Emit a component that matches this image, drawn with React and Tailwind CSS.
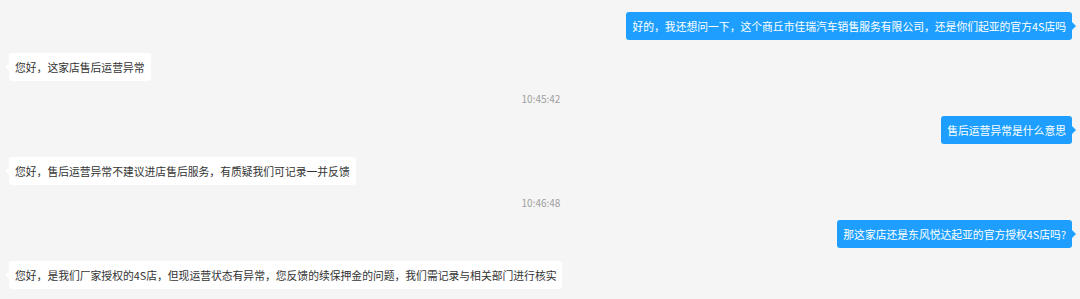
const messages = [
  { type: 'out', text: '好的，我还想问一下，这个商丘市佳瑞汽车销售服务有限公司，还是你们起亚的官方4S店吗' },
  { type: 'in', text: '您好，这家店售后运营异常' },
  { type: 'time', text: '10:45:42' },
  { type: 'out', text: '售后运营异常是什么意思' },
  { type: 'in', text: '您好，售后运营异常不建议进店售后服务，有质疑我们可记录一并反馈' },
  { type: 'time', text: '10:46:48' },
  { type: 'out', text: '那这家店还是东风悦达起亚的官方授权4S店吗?' },
  { type: 'in', text: '您好，是我们厂家授权的4S店，但现运营状态有异常，您反馈的续保押金的问题，我们需记录与相关部门进行核实' },
]

function Bubble({ text, mine }) {
  return (
    <div className={mine ? 'flex justify-end pr-2' : 'flex justify-start pl-[9px]'}>
      <div
        className={
          'relative rounded-[3px] px-[6px] h-[28px] flex items-center text-[10.8px] leading-[16px] whitespace-nowrap ' +
          (mine ? 'bg-[#1e9fff] text-white' : 'bg-white text-[#333333]')
        }
      >
        {text}
        {mine ? (
          <span className="absolute right-[-4px] top-1/2 -translate-y-1/2 w-0 h-0 border-y-[4px] border-y-transparent border-l-[4px] border-l-[#1e9fff]" />
        ) : (
          <span className="absolute left-[-4px] top-1/2 -translate-y-1/2 w-0 h-0 border-y-[4px] border-y-transparent border-r-[4px] border-r-white" />
        )}
      </div>
    </div>
  )
}

export default function App() {
  return (
    <div
      className="w-[1080px] h-[299px] overflow-hidden bg-[#f5f5f5] pt-3"
      style={{ fontFamily: '"Noto Sans CJK SC", "Microsoft YaHei", sans-serif' }}
    >
      {messages.map((m, i) => {
        if (m.type === 'time') {
          return (
            <div key={i} className="mt-[11px] mb-[10px] text-center text-[10px] leading-[14px] text-[#a0a0a0] pl-[2px]">
              {m.text}
            </div>
          )
        }
        const prev = messages[i - 1]
        const gap = prev && prev.type !== 'time' ? 'mt-[13px]' : ''
        return (
          <div key={i} className={gap}>
            <Bubble text={m.text} mine={m.type === 'out'} />
          </div>
        )
      })}
    </div>
  )
}
